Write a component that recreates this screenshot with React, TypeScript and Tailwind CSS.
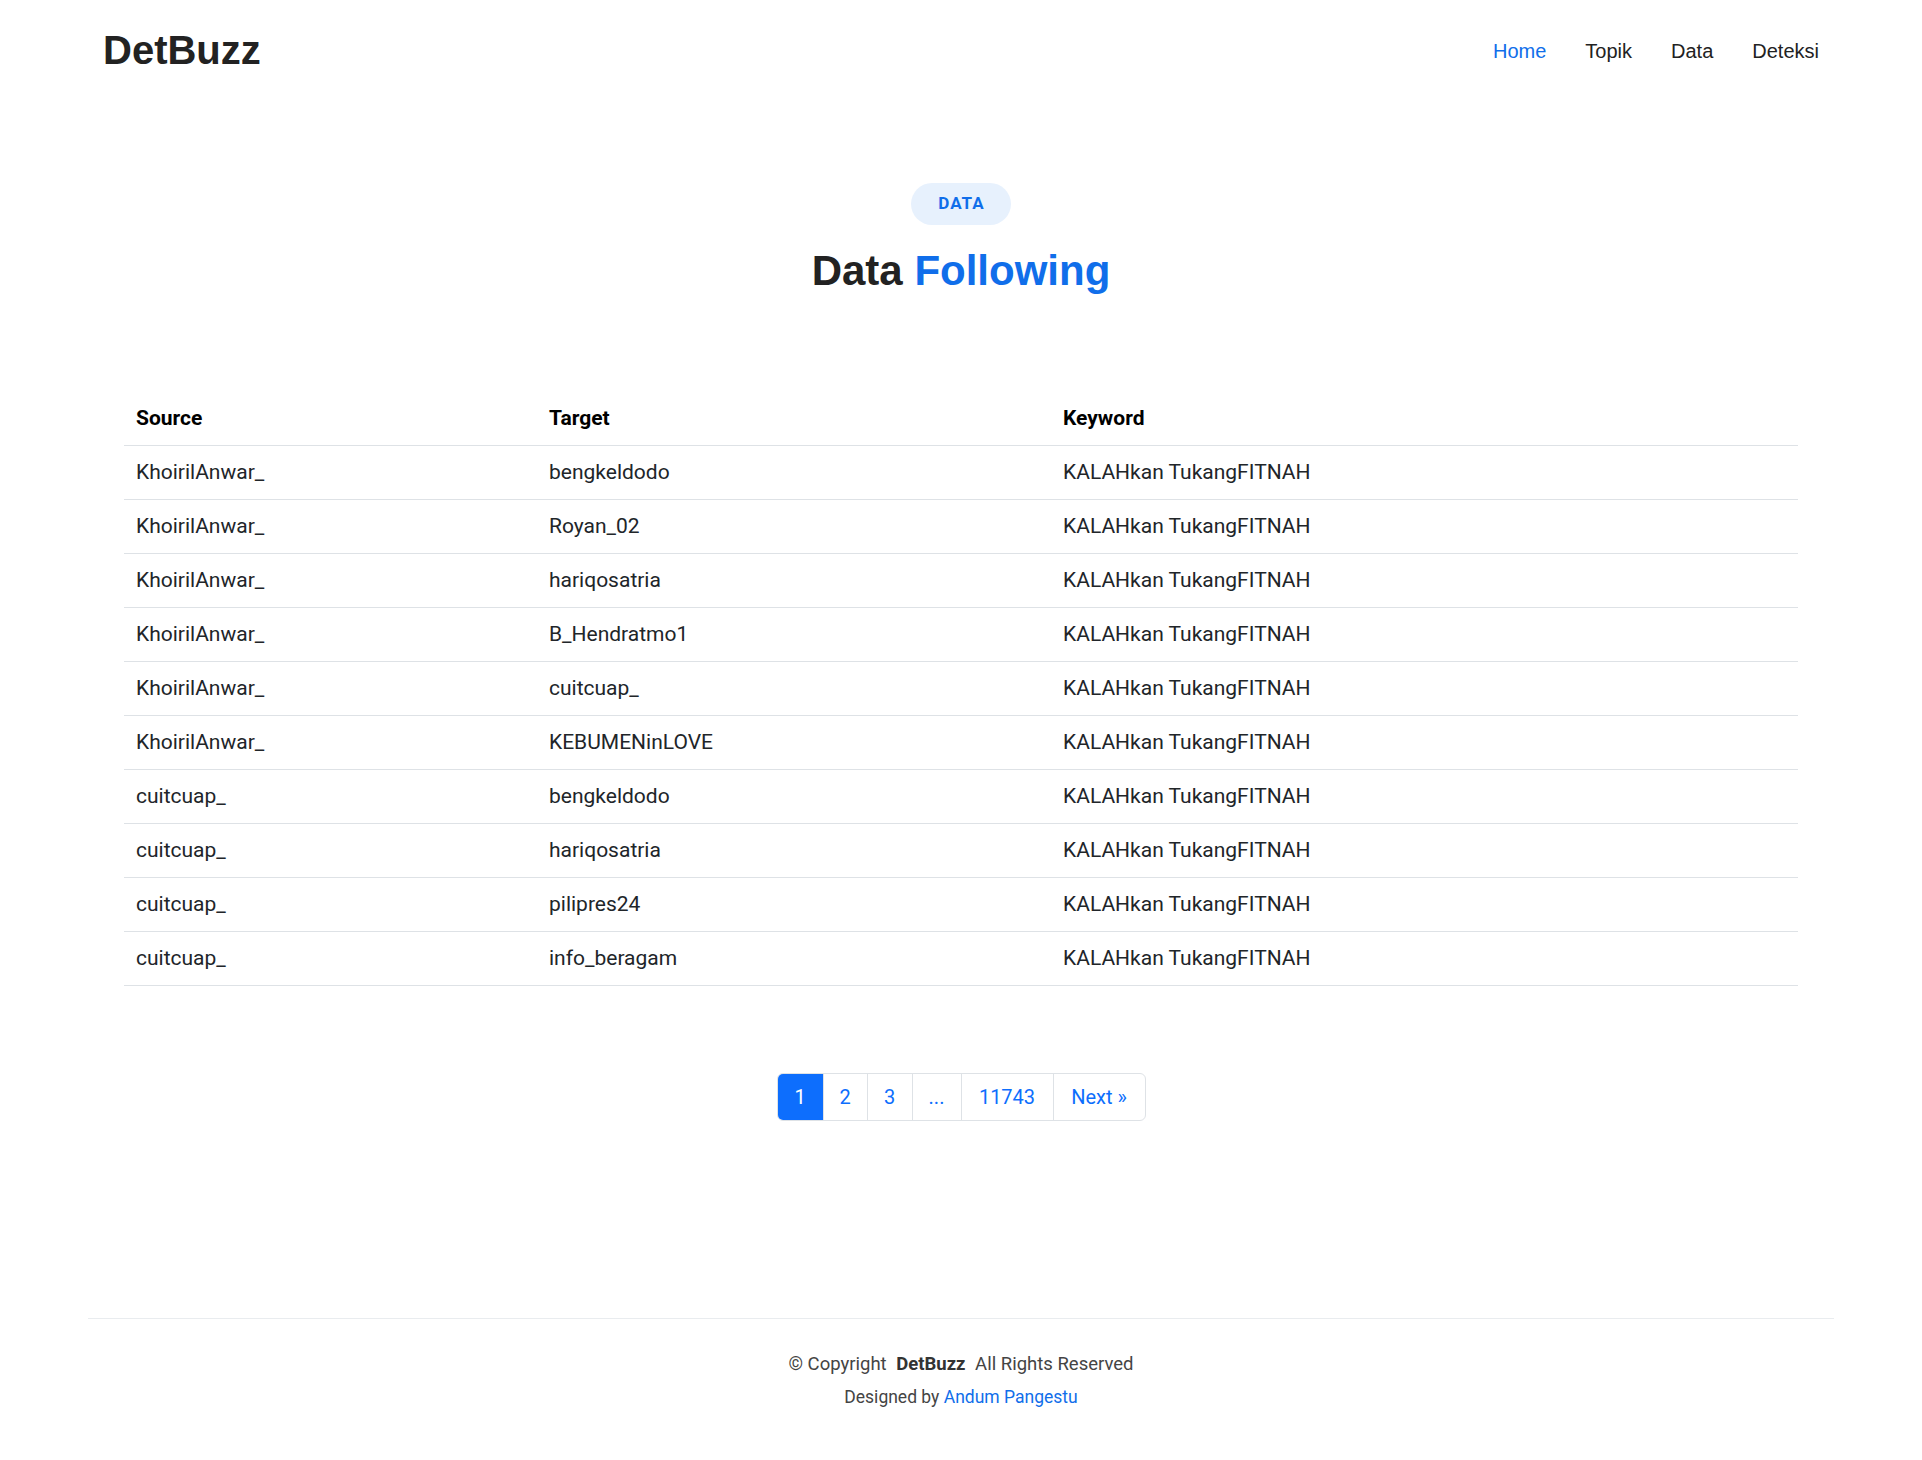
import React from "react";

const rows: [string, string, string][] = [
  ["KhoirilAnwar_", "bengkeldodo", "KALAHkan TukangFITNAH"],
  ["KhoirilAnwar_", "Royan_02", "KALAHkan TukangFITNAH"],
  ["KhoirilAnwar_", "hariqosatria", "KALAHkan TukangFITNAH"],
  ["KhoirilAnwar_", "B_Hendratmo1", "KALAHkan TukangFITNAH"],
  ["KhoirilAnwar_", "cuitcuap_", "KALAHkan TukangFITNAH"],
  ["KhoirilAnwar_", "KEBUMENinLOVE", "KALAHkan TukangFITNAH"],
  ["cuitcuap_", "bengkeldodo", "KALAHkan TukangFITNAH"],
  ["cuitcuap_", "hariqosatria", "KALAHkan TukangFITNAH"],
  ["cuitcuap_", "pilipres24", "KALAHkan TukangFITNAH"],
  ["cuitcuap_", "info_beragam", "KALAHkan TukangFITNAH"],
];

export default function App() {
  return (
    <div className="w-[1922px] min-h-[1460px] bg-white font-['Roboto',sans-serif] text-[#212529]">
      {/* Header */}
      <header className="mx-auto flex h-[100px] w-[1716px] items-center justify-between">
        <div className="font-['Liberation_Sans',Arial,sans-serif] text-[40px] font-bold leading-none text-[#222222]">
          DetBuzz
        </div>
        <nav className="mt-[2px] flex items-center gap-[39px] font-['Liberation_Sans',Arial,sans-serif] text-[20px] leading-none">
          <a className="text-[#106eea]">Home</a>
          <a className="text-[#222222]">Topik</a>
          <a className="text-[#222222]">Data</a>
          <a className="text-[#222222]">Deteksi</a>
        </nav>
      </header>

      {/* Section title */}
      <section className="flex flex-col items-center pt-[83px]">
        <div className="flex h-[42px] w-[100px] items-center justify-center rounded-full bg-[#e7f1fd] pl-[1px] text-[17px] font-bold tracking-[1px] text-[#106eea]">
          DATA
        </div>
        <h1 className="mt-[25px] font-['Liberation_Sans',Arial,sans-serif] text-[42px] font-bold leading-none text-[#222222]">
          Data <span className="text-[#106eea]">Following</span>
        </h1>
      </section>

      {/* Table */}
      <div className="mx-auto mt-[100px] w-[1674px] text-[21px]">
        <div className="grid h-[54px] grid-cols-[413px_514px_1fr] items-center border-b border-[#dee2e6] font-bold text-black">
          <div className="px-3">Source</div>
          <div className="px-3">Target</div>
          <div className="px-3">Keyword</div>
        </div>
        {rows.map((r, i) => (
          <div
            key={i}
            className="grid h-[54px] grid-cols-[413px_514px_1fr] items-center border-b border-[#dee2e6]"
          >
            <div className="px-3">{r[0]}</div>
            <div className="px-3">{r[1]}</div>
            <div className="px-3">{r[2]}</div>
          </div>
        ))}
      </div>

      {/* Pagination */}
      <div className="mt-[87px] flex justify-center">
        <div className="flex h-[48px] overflow-hidden rounded-[6px] border border-[#dee2e6] text-[20px] text-[#0d6efd]">
          <div className="flex w-[45px] items-center justify-center bg-[#0d6efd] text-white">1</div>
          <div className="flex w-[44px] items-center justify-center border-l border-[#dee2e6]">2</div>
          <div className="flex w-[45px] items-center justify-center border-l border-[#dee2e6]">3</div>
          <div className="flex w-[49px] items-center justify-center border-l border-[#dee2e6]">...</div>
          <div className="flex w-[92px] items-center justify-center border-l border-[#dee2e6]">11743</div>
          <div className="flex w-[92px] items-center justify-center border-l border-[#dee2e6]">Next »</div>
        </div>
      </div>

      {/* Footer */}
      <footer className="mx-auto mt-[197px] w-[1746px] border-t border-[#e9ecef] pb-[49px] pt-[32px] text-center text-[#444444]">
        <div className="text-[18.5px] leading-[27px]">
          © Copyright <strong className="px-[5px] font-bold text-[#333333]">DetBuzz</strong> All Rights Reserved
        </div>
        <div className="mt-[6px] text-[17.5px] leading-[26px]">
          Designed by <a className="text-[#106eea]">Andum Pangestu</a>
        </div>
      </footer>
    </div>
  );
}
